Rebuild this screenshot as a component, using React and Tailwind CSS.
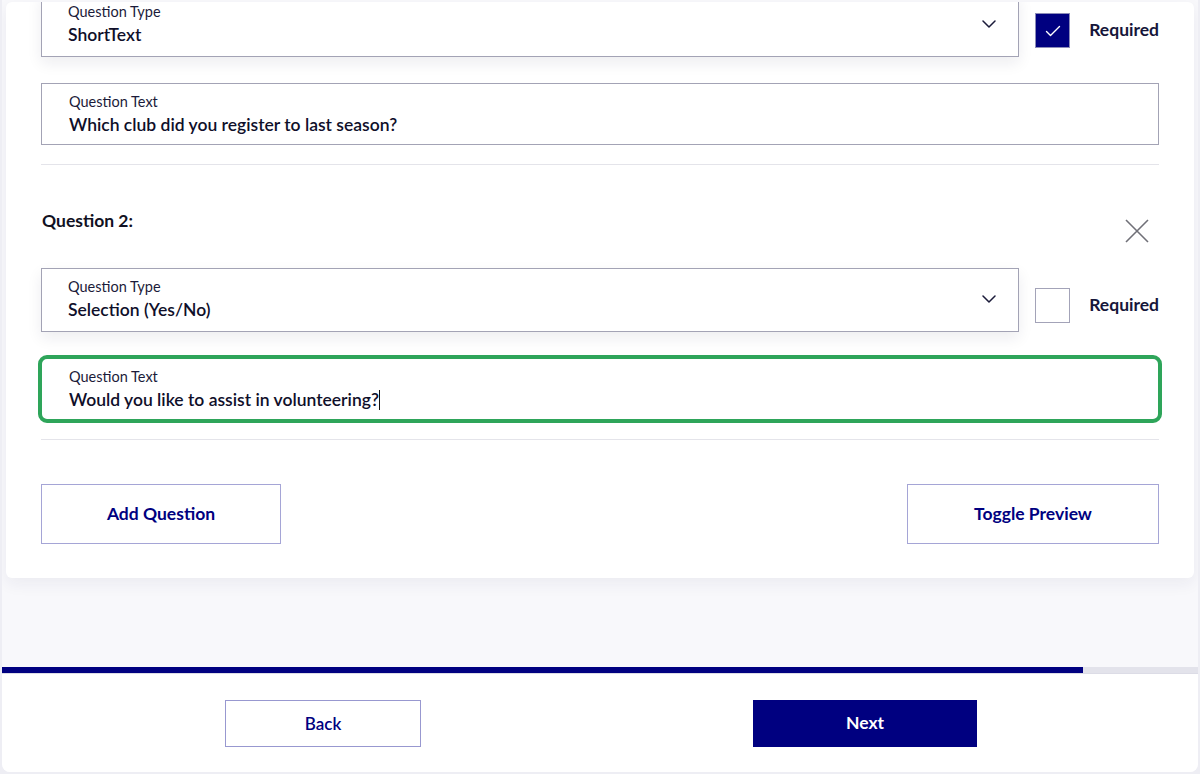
const NAVY = 'text-[#000080]'

function Chevron() {
  return (
    <svg width="14" height="8" viewBox="0 0 14 8" fill="none" className="shrink-0">
      <path d="M1 1l6 6 6-6" stroke="#1b1b3a" strokeWidth="1.5" strokeLinecap="round" strokeLinejoin="round" />
    </svg>
  )
}

function CloseIcon() {
  return (
    <svg width="24" height="24" viewBox="0 0 24 24" fill="none" className="mt-[10px] mr-[10px]">
      <path d="M1 1l22 22M23 1L1 23" stroke="#707078" strokeWidth="1.6" />
    </svg>
  )
}

function Checkbox({ checked }) {
  return (
    <div
      className={`w-[35px] h-[35px] shrink-0 flex items-center justify-center border ${
        checked ? 'bg-[#000080] border-[#8c8cb8]' : 'bg-white border-[#a3a3b8]'
      }`}
    >
      {checked && (
        <svg width="16" height="12" viewBox="0 0 16 12" fill="none">
          <path d="M1.5 6.5l4 4 9-9" stroke="white" strokeWidth="1.4" strokeLinecap="round" strokeLinejoin="round" />
        </svg>
      )}
    </div>
  )
}

function TypeRow({ value, required }) {
  return (
    <div className="flex items-start">
      <div className="flex-1 h-[64px] border border-[#a3a3b5] bg-white shadow-[0_6px_14px_rgba(20,20,60,0.08)] flex items-start pl-[26px] pr-[22px] pt-[9px]">
        <div className="flex-1">
          <div className="text-[14.5px] leading-[18px] text-[#1b1b3a]">Question Type</div>
          <div className="text-[17.5px] leading-[20px] mt-[4px] font-semibold text-[#0f0f2a]">{value}</div>
        </div>
        <div className="mt-[17px]">
          <Chevron />
        </div>
      </div>
      <div className="flex items-center ml-[16px] mt-[20px]">
        <Checkbox checked={required} />
        <span className="ml-[19px] text-[17.5px] font-bold text-[#16163a]">Required</span>
      </div>
    </div>
  )
}

function TextBox({ value, focused }) {
  return (
    <div className="relative mt-[26px]">
      <div
        className={`h-[62px] border bg-white pl-[27px] pt-[9px] ${
          focused ? 'border-[#111]' : 'border-[#a3a3b5]'
        }`}
      >
        <div className="text-[14.5px] leading-[18px] text-[#1b1b3a]">Question Text</div>
        <div className="text-[17.5px] leading-[20px] mt-[4px] font-semibold text-[#0f0f2a] flex items-center">
          {value}
          {focused && <span className="inline-block w-px h-[20px] bg-[#111]" />}
        </div>
      </div>
      {focused && (
        <div className="absolute -inset-[3px] rounded-[9px] border-4 border-[#2ea55a] pointer-events-none" />
      )}
    </div>
  )
}

function Divider() {
  return <div className="h-px bg-[#e4e4ea] mt-[19px]" />
}

export default function App() {
  return (
    <div className="h-[774px] bg-[#eeeef4] px-[2px] pb-[2px] overflow-hidden font-['Lato','Noto_Sans',sans-serif]">
      <div className="h-full rounded-b-lg bg-[#f8f8fb] flex flex-col overflow-hidden">
        <div className="mx-[4px] mt-[2px] h-[576px] bg-white rounded-md overflow-hidden shadow-[0_6px_16px_rgba(30,30,80,0.06)] shrink-0">
          <div className="-mt-[9px] px-[35px]">
            <TypeRow value="ShortText" required />
            <TextBox value="Which club did you register to last season?" />
            <Divider />

            <div className="flex items-start justify-between pt-[44px]">
              <h3 className="text-[17.5px] leading-6 font-bold text-[#111122] pl-px">Question 2:</h3>
              <CloseIcon />
            </div>
            <div className="mt-[25px]">
              <TypeRow value="Selection (Yes/No)" required={false} />
            </div>
            <TextBox value="Would you like to assist in volunteering?" focused />
            <Divider />

            <div className="flex justify-between mt-[44px]">
              <button className={`w-[240px] h-[60px] border border-[#a5a5d6] bg-white text-[17.5px] font-bold ${NAVY}`}>
                Add Question
              </button>
              <button className={`w-[252px] h-[60px] border border-[#a5a5d6] bg-white text-[17.5px] font-bold ${NAVY}`}>
                Toggle Preview
              </button>
            </div>
          </div>
        </div>

        <div className="flex-1" />

        <div className="h-[6px] bg-[#e3e3eb] shrink-0">
          <div className="h-full bg-[#000080]" style={{ width: '90.4%' }} />
        </div>
        <div className="h-[99px] bg-white border-t border-[#dcdce6] flex items-start pt-[26px] shrink-0">
          <button className={`ml-[223px] w-[196px] h-[47px] border border-[#9898d0] bg-white text-[17px] font-semibold ${NAVY}`}>
            Back
          </button>
          <button className="ml-[332px] w-[224px] h-[47px] bg-[#000080] text-white text-[17.5px] font-bold">
            Next
          </button>
        </div>
      </div>
    </div>
  )
}
